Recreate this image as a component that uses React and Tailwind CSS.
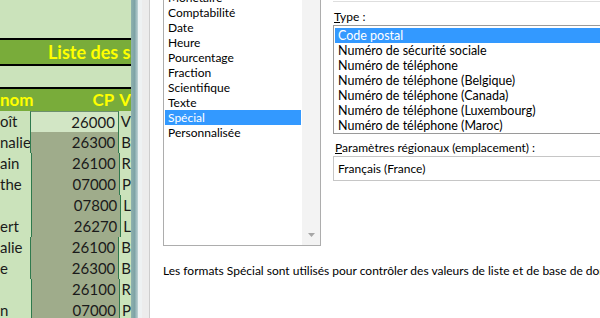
const categories = [
  "Monétaire",
  "Comptabilité",
  "Date",
  "Heure",
  "Pourcentage",
  "Fraction",
  "Scientifique",
  "Texte",
  "Spécial",
  "Personnalisée",
];

const types = [
  "Code postal",
  "Numéro de sécurité sociale",
  "Numéro de téléphone",
  "Numéro de téléphone (Belgique)",
  "Numéro de téléphone (Canada)",
  "Numéro de téléphone (Luxembourg)",
  "Numéro de téléphone (Maroc)",
];

const rows = [
  ["oît", "26000", "V"],
  ["nalie", "26300", "B"],
  ["ain", "26100", "R"],
  ["the", "07000", "P"],
  ["", "07800", "L"],
  ["ert", "26270", "L"],
  ["alie", "26100", "B"],
  ["e", "26300", "B"],
  ["", "26100", "R"],
  ["n", "07000", "P"],
];

function Sheet() {
  return (
    <div className="w-[131px] shrink-0 h-full bg-[#cbe3bb] font-['Lato',sans-serif] overflow-hidden">
      <div className="h-[38px]" />
      <div className="h-[2px] bg-black" />
      <div className="h-[24px] bg-[#79ac3a] text-[#ffff00] font-bold text-[18px] leading-[24px] pl-[48px] whitespace-nowrap">
        Liste des salariés
      </div>
      <div className="h-[2px] bg-black" />
      <div className="h-[21px]" />
      <div className="h-[2px] bg-black" />
      {/* header */}
      <div className="h-[22px] bg-[#79ac3a] text-[#ffff00] font-bold text-[17px] leading-[22px] flex whitespace-nowrap">
        <div className="w-[33px] text-right pr-[2px]">nom</div>
        <div className="w-[92px] text-right pr-[3px]">CP</div>
        <div className="pl-[2px]">V</div>
      </div>
      {/* data */}
      <div className="text-[15px] text-[#1a1a1a] leading-[21px]">
        {rows.map((r, i) => (
          <div key={i} className="h-[21px] flex whitespace-nowrap">
            <div className="w-[32px] overflow-hidden">{r[0]}</div>
            <div
              className={
                "w-[93px] border-x border-[#2f7a4e] text-right pr-[3px] " +
                (i === 0
                  ? "bg-[#d2e6c5] border-t border-t-[#6c8f6e]"
                  : "bg-[#9fac8b]")
              }
            >
              {r[1]}
            </div>
            <div className="pl-[2px]">{r[2]}</div>
          </div>
        ))}
      </div>
    </div>
  );
}

function CategoryList() {
  return (
    <div className="w-[158px] h-[258px] mt-[-12px] shrink-0 border border-[#adadad] bg-white flex">
      <div className="flex-1 pt-[1px] px-[1px]">
        {categories.map((c) => (
          <div
            key={c}
            className={
              "h-[15px] leading-[15px] pl-[3px] whitespace-nowrap " +
              (c === "Spécial" ? "bg-[#3399ff] text-white" : "")
            }
          >
            {c}
          </div>
        ))}
      </div>
      <div className="w-[18px] bg-[#f3f3f3] flex flex-col justify-end items-center pb-[8px]">
        <svg width="7" height="4" viewBox="0 0 7 4">
          <path d="M0 0h7L3.5 4z" fill="#a6a6a6" />
        </svg>
      </div>
    </div>
  );
}

function RightPanel() {
  return (
    <div className="w-[300px] shrink-0">
      <div className="h-[2px] border-b border-[#dedede]" />
      <div className="mt-[7px] h-[15px] leading-[15px] pl-[1px]">
        <span className="underline">T</span>ype :
      </div>
      <div className="mt-[1px] border border-[#9a9a9a] pt-[2px] px-[1px] bg-white text-[12.5px]">
        {types.map((t, i) => (
          <div
            key={t}
            className={
              "h-[15px] leading-[15px] pl-[3px] whitespace-nowrap " +
              (i === 0 ? "bg-[#3399ff] text-white" : "")
            }
          >
            {t}
          </div>
        ))}
      </div>
      <div className="mt-[6px] h-[15px] leading-[15px] pl-[2px]">
        <span className="underline">P</span>aramètres régionaux (emplacement) :
      </div>
      <div className="mt-[1px] h-[25px] border border-[#c6c6c6] leading-[23px] pl-[4px]">
        Français (France)
      </div>
    </div>
  );
}

export default function App() {
  return (
    <div className="w-[600px] h-[318px] overflow-hidden flex bg-white">
      <Sheet />
      <div className="w-[7px] shrink-0 bg-gradient-to-r from-[#8fb2ad] via-[#7ea3a6] to-[#bfd3d5]" />
      <div className="w-[4px] shrink-0 bg-[#eef2f3]" />
      <div className="w-[8px] shrink-0 bg-[#ececec] border-r border-[#cdcdcd]" />
      <div className="flex-1 min-w-0 bg-white pl-[13px] font-['Lato',sans-serif] text-[12px] text-black">
        <div className="flex items-start gap-[12px]">
          <CategoryList />
          <RightPanel />
        </div>
        <p className="mt-[17px] leading-[15px] whitespace-nowrap">
          Les formats Spécial sont utilisés pour contrôler des valeurs de liste et de base de données.
        </p>
      </div>
    </div>
  );
}
